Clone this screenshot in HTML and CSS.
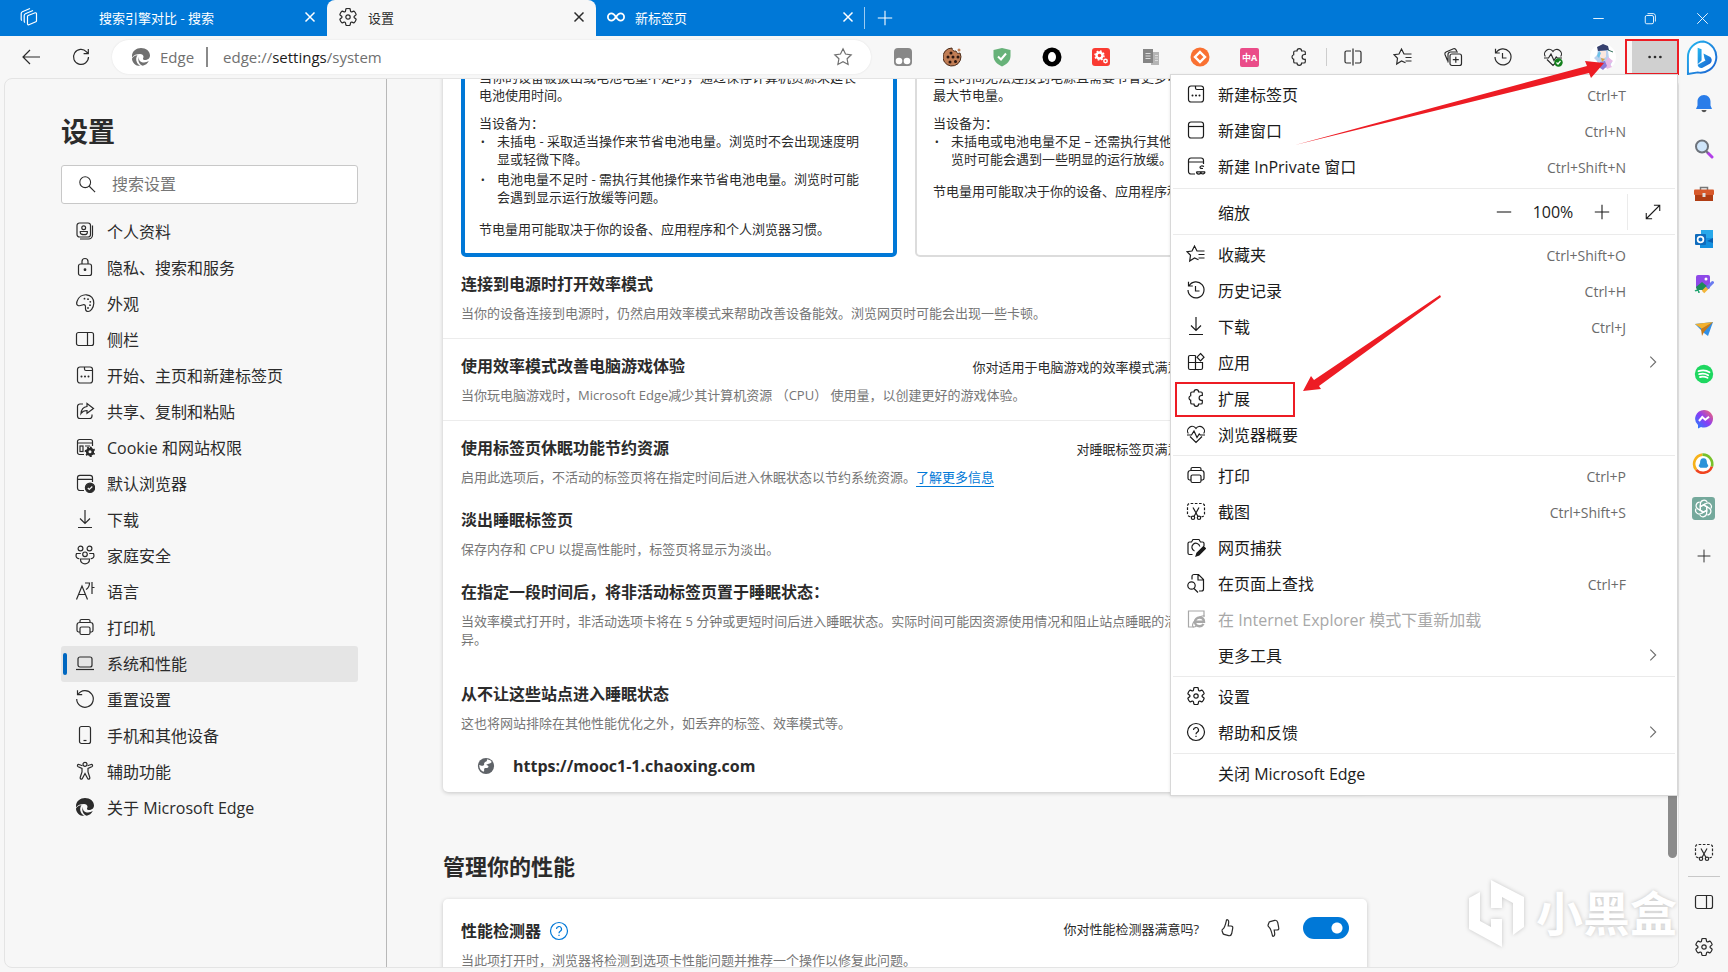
FILE: index.html
```html
<!DOCTYPE html>
<html lang="zh-CN">
<head>
<meta charset="UTF-8">
<title>设置</title>
<link rel="stylesheet" href="styles.css">
</head>
<body>

<!-- icon sprite -->
<svg class="sprite" xmlns="http://www.w3.org/2000/svg">
  <symbol id="i-gear" viewBox="0 0 20 20"><path d="M1.91 7.38A8.5 8.5 0 0 1 3.7 4.3a.5.5 0 0 1 .54-.13l1.92.68a1 1 0 0 0 1.32-.76l.36-2a.5.5 0 0 1 .4-.4 8.53 8.53 0 0 1 3.55 0c.2.04.35.2.38.4l.37 2a1 1 0 0 0 1.32.76l1.92-.68a.5.5 0 0 1 .54.13 8.5 8.5 0 0 1 1.78 3.08c.06.2 0 .4-.15.54l-1.56 1.32a1 1 0 0 0 0 1.52l1.56 1.32a.5.5 0 0 1 .15.54 8.5 8.5 0 0 1-1.78 3.08.5.5 0 0 1-.54.13l-1.92-.68a1 1 0 0 0-1.32.76l-.37 2a.5.5 0 0 1-.38.4 8.53 8.53 0 0 1-3.56 0 .5.5 0 0 1-.39-.4l-.36-2a1 1 0 0 0-1.32-.76l-1.92.68a.5.5 0 0 1-.54-.13 8.5 8.5 0 0 1-1.78-3.08.5.5 0 0 1 .15-.54l1.56-1.32a1 1 0 0 0 0-1.52L2.06 7.92a.5.5 0 0 1-.15-.54Z"/><circle cx="10" cy="10" r="2.2"/></symbol>
  <symbol id="i-close" viewBox="0 0 20 20"><path d="M5 5l10 10M15 5L5 15"/></symbol>
  <symbol id="i-plus" viewBox="0 0 20 20"><path d="M10 2v16M2 10h16"/></symbol>
  <symbol id="i-minus" viewBox="0 0 20 20"><path d="M2 10h16"/></symbol>
  <symbol id="i-chevron" viewBox="0 0 20 20"><path d="M7 4l6 6-6 6"/></symbol>
  <symbol id="i-workspaces" viewBox="0 0 20 20"><path d="M8.500 9.500a1 1 0 0 1 .7-1l7-2.700a1 1 0 0 1 1.300 1v7a1 1 0 0 1-.6.9l-7 3a1 1 0 0 1-1.400-.9zM6 15.500a1.500 1.500 0 0 1-.8-1.300V8.500A2 2 0 0 1 6.400 6.700l7.600-3.200M3 13.500a1.500 1.500 0 0 1-.8-1.300V6.500A2 2 0 0 1 3.400 4.700L11 1.500"/></symbol>
  <symbol id="i-back" viewBox="0 0 20 20"><path d="M19 10H2M9 3l-7 7 7 7"/></symbol>
  <symbol id="i-reload" viewBox="0 0 20 20"><path d="M17.500 10a7.500 7.500 0 1 1-2-5.200L17 6.500M17.300 2v4.700h-4.700"/></symbol>
  <symbol id="i-edge" viewBox="0 0 20 20"><path fill="currentColor" stroke="none" d="M1 9C1 4 5.500 1 10 1c5 0 9 3 9 7.500 0 3-2.500 4.500-5 4.500-1.500 0-2.300-.7-2-1.500.3-.7.500-1 .5-1.700 0-1.500-1.500-2.800-3.500-2.800C5.500 7 2.500 8 1 10.500z"/><path fill="currentColor" stroke="none" d="M1 11.500C2 9.500 4 8.300 6.500 8.200 5 10 4.700 13 6 15.500c.9 1.700 2.200 2.800 3.500 3.500C4.500 19.200 1 15.500 1 11.500z"/><path fill="currentColor" stroke="none" d="M8 9.500c-.8 3 .9 5.500 4 5.900 2 .3 4-.3 5.800-1.300-1.300 2.600-3.500 4.200-6 4.700-3.400-1.200-5.600-5.300-3.800-9.300z"/></symbol>
  <symbol id="i-star" viewBox="0 0 20 20"><path d="M10 1.800l2.500 5.200 5.700.8-4.100 4 1 5.700-5.100-2.700-5.100 2.700 1-5.700-4.100-4 5.700-.8z"/></symbol>
  <symbol id="i-favs" viewBox="0 0 20 20"><path d="M12.500 15.800L8.500 14l-4.800 3 .8-5.700L1 7.700 6 7l2.500-5L11 7h7.500M12.500 10.500h6M12.500 14h6"/></symbol>
  <symbol id="i-puzzle" viewBox="0 0 20 20"><path d="M6.500 4H8a2.300 2.300 0 0 1 4.600 0H15a1.300 1.300 0 0 1 1.300 1.300V7.500h-.8a2.300 2.300 0 0 0 0 4.800h.8v2.400A1.300 1.300 0 0 1 15 16h-2.400a2.300 2.300 0 0 1-4.600 0H6a1.300 1.300 0 0 1-1.300-1.300v-2.400a2.400 2.400 0 0 1 0-4.600V5.300A1.300 1.300 0 0 1 6 4z"/></symbol>
  <symbol id="i-split" viewBox="0 0 20 20"><path d="M8 4H3.500A1.500 1.500 0 0 0 2 5.500v9A1.500 1.500 0 0 0 3.500 16H8M12 4h4.500A1.500 1.500 0 0 1 18 5.500v9a1.500 1.500 0 0 1-1.500 1.500H12M10 1.500v17"/></symbol>
  <symbol id="i-collect" viewBox="0 0 20 20"><rect x="7" y="7" width="11.500" height="11.500" rx="2"/><path d="M12.800 9.700v6M9.800 12.700h6M4.500 13.500L2 7.500a2 2 0 0 1 1-2.500l7.500-3.200a2 2 0 0 1 2.500 1l.7 1.500M5 15.500V7.500a2.500 2.500 0 0 1 2.500-2.500H15"/></symbol>
  <symbol id="i-history" viewBox="0 0 20 20"><path d="M3 6a8 8 0 1 1-1 4M2.500 1.800V6h4.300M9.500 6v5h4"/></symbol>
  <symbol id="i-heart" viewBox="0 0 20 20"><path d="M2.300 9.500A4.500 4.500 0 0 1 10 4.500a4.500 4.500 0 0 1 7.700 5M4 12.500l6 6 6-6M1 11h4.500L8 7l3 6.500 2.200-3.500 1 1H19"/></symbol>
  <symbol id="i-newtab" viewBox="0 0 20 20"><rect x="2.500" y="2" width="15" height="16" rx="2.500"/><path d="M9.500 2v2A1.500 1.500 0 0 0 11 5.500h6.500"/><path stroke-width="2" stroke-linecap="round" d="M6.500 11.500h.01M10 11.500h.01M13.500 11.500h.01"/></symbol>
  <symbol id="i-window" viewBox="0 0 20 20"><rect x="2.500" y="2" width="15" height="16" rx="2.500"/><path d="M2.500 6.500h15"/></symbol>
  <symbol id="i-inprivate" viewBox="0 0 20 20"><path d="M9 18H5a2.500 2.500 0 0 1-2.500-2.500v-11A2.500 2.500 0 0 1 5 2h10a2.500 2.500 0 0 1 2.500 2.500V8M2.500 6h15M18 10.500c-2-1-4-.5-4 .8s1.500 1.200 3 1.200M10.500 15.800h8.500M15 15.800c0 3-4.500 3-4.500 0M19 15.800c0 2.500-3 2.700-4 1.200"/></symbol>
  <symbol id="i-expand" viewBox="0 0 20 20"><path d="M2.500 17.500l15-15M11 2.500h6.500V9M2.500 11v6.500H9"/></symbol>
  <symbol id="i-download" viewBox="0 0 20 20"><path d="M10 1v13M5 9.500l5 5 5-5M3 18.500h14"/></symbol>
  <symbol id="i-apps" viewBox="0 0 20 20"><path d="M9.500 3.500H4A1.500 1.500 0 0 0 2.500 5v11A1.500 1.500 0 0 0 4 17.500h11a1.500 1.500 0 0 0 1.500-1.500v-5.500h-14M9.500 3.500v14M14.500 1.500l3.500 3.700-3.500 3.700L11 5.200z"/></symbol>
  <symbol id="i-print" viewBox="0 0 20 20"><path d="M5 15H3.500A1.700 1.700 0 0 1 2 13.300V8a2.500 2.500 0 0 1 2.500-2.500h11A2.500 2.500 0 0 1 18 8v5.300a1.700 1.700 0 0 1-1.500 1.700H15M5 5.500V4a1.500 1.500 0 0 1 1.500-1.500h7A1.500 1.500 0 0 1 15 4v1.500"/><rect x="5" y="10" width="10" height="7.500" rx="1.500"/></symbol>
  <symbol id="i-snip" viewBox="0 0 20 20"><path stroke-dasharray="2.600 1.600" d="M4.500 15.500A2.500 2.500 0 0 1 1.500 13V5A2.500 2.500 0 0 1 4 2.500h12A2.500 2.500 0 0 1 18.500 5v8a2.500 2.500 0 0 1-3 2.500"/><path d="M7 6.500l5 9M13 6.500l-5 9"/><circle cx="7" cy="16.800" r="1.700"/><circle cx="13" cy="16.800" r="1.700"/></symbol>
  <symbol id="i-capture" viewBox="0 0 20 20"><path d="M6.500 17.500H3.500A1.500 1.500 0 0 1 2 16V6.500A1.500 1.500 0 0 1 3.500 5H5.500L7 2.500h6L14.500 5h2A1.500 1.500 0 0 1 18 6.500V9M8.500 14a4 4 0 1 1 5.300-4.500"/><path fill="currentColor" d="M17.500 9.500l2 2-6.500 6.500-3 1 1-3z"/></symbol>
  <symbol id="i-find" viewBox="0 0 20 20"><circle cx="5.500" cy="12.500" r="3.700"/><path d="M8 15.500l4 4M6 6.500v-3A2 2 0 0 1 8 1.500h4.500l5 5v9.500a2 2 0 0 1-2 2H13M12 1.500v5.500h5.500"/></symbol>
  <symbol id="i-ie" viewBox="0 0 20 20"><path d="M18 8V2H2.500v16H8"/><path stroke-width="2.400" d="M8.500 12.800H18c0-3-2-4.300-4.500-4.300S9 10.500 9 13s2 4.200 4.500 4.200c2 0 3.200-.8 4-2.200"/><path d="M18.500 7c-3-1.500-12 5-12 9.500 0 2 2 1.800 4 .5"/></symbol>
  <symbol id="i-help" viewBox="0 0 20 20"><circle cx="10" cy="10" r="8.500"/><path d="M7.500 8a2.500 2.500 0 1 1 3.700 2.200c-.8.500-1.200.9-1.200 2M10 13.800v1.300"/></symbol>
  <symbol id="i-search" viewBox="0 0 20 20"><circle cx="8" cy="8" r="6"/><path d="M12.500 12.500L19 19"/></symbol>
  <symbol id="i-profile" viewBox="0 0 20 20"><rect x="2" y="2" width="13.500" height="14" rx="2.500"/><circle cx="8.700" cy="6.800" r="1.900"/><path d="M5.300 10.500h7v1.200c0 2.600-7 2.600-7 0zM17.500 4.500V14a4 4 0 0 1-4 4H5"/></symbol>
  <symbol id="i-lock" viewBox="0 0 20 20"><rect x="3.500" y="7" width="13" height="11.500" rx="2"/><path d="M7 7V4.500a3 3 0 0 1 6 0V7"/><circle cx="10" cy="12.700" r=".8" fill="currentColor"/></symbol>
  <symbol id="i-palette" viewBox="0 0 20 20"><path d="M2 8.500C3.500 4 7.500 1.500 11.500 1.800c4.500.3 7.500 4 7.300 8.500-.2 5-3.500 8.400-6 8.200-2.500-.3-2.500-2.500-2.300-4.300.2-2-1-3-2.500-2.500-2 .8-3.300 1.600-5 .8C1.300 11.700 1.500 9.900 2 8.500z"/><path stroke-width="1.800" stroke-linecap="round" d="M9.500 5.700h.01M13 6.200h.01M15.300 8.800h.01M15 12.200h.01M13 15h.01"/></symbol>
  <symbol id="i-panel" viewBox="0 0 20 20"><rect x="1.500" y="3.500" width="17" height="13" rx="2"/><path d="M12.500 3.500v13"/></symbol>
  <symbol id="i-share" viewBox="0 0 20 20"><path d="M8 3H5a2.500 2.500 0 0 0-2.500 2.500v9.500A2.500 2.500 0 0 0 5 17.500h9.500a2.500 2.500 0 0 0 2.500-2.500v-1.500M12 2.500l6.500 5L12 12.300V9.500c-3 0-4.500.8-6 3 .3-4 2.500-6.500 6-7z"/></symbol>
  <symbol id="i-cookie" viewBox="0 0 20 20"><path d="M9 17.500H4.500a2 2 0 0 1-2-2v-11a2 2 0 0 1 2-2h11a2 2 0 0 1 2 2V9M2.500 6h15M10 9h5"/><rect x="5" y="9" width="3" height="5.500"/><circle cx="15" cy="14.800" r="2.800" stroke-width="2.600"/><path stroke-width="2" stroke-dasharray="1.700 2.230" d="M15 10.500a4.300 4.300 0 1 1-.01 0"/></symbol>
  <symbol id="i-default" viewBox="0 0 20 20"><path d="M9 17.500H5A2.500 2.500 0 0 1 2.500 15V4.800A2.500 2.500 0 0 1 5 2.300h10a2.500 2.500 0 0 1 2.500 2.500V9M2.500 6.300h15"/><circle cx="15" cy="14.800" r="4.600" fill="currentColor"/><path stroke="#f7f7f7" d="M12.800 15l1.500 1.500 3-3"/></symbol>
  <symbol id="i-family" viewBox="0 0 20 20"><circle cx="5.500" cy="3.500" r="2.400"/><circle cx="14.500" cy="3.500" r="2.400"/><circle cx="10" cy="9.300" r="2.300"/><path d="M5.800 8.500H1.500c-1.300 3.500.5 5.300 2.800 5M14.200 8.500h4.300c1.300 3.500-.5 5.300-2.800 5M5.500 14h9c.5 6.500-9.500 6.500-9 0z"/></symbol>
  <symbol id="i-lang" viewBox="0 0 20 20"><path d="M1.500 18.500L7 5l5.500 13.500M3.500 13.500h7M10 2h4.500c0 3-1 5-3.500 6.500M17 1v12M17 6.500h2.500"/></symbol>
  <symbol id="i-laptop" viewBox="0 0 20 20"><rect x="3" y="4" width="14" height="10" rx="2"/><path d="M1 16.500h18"/></symbol>
  <symbol id="i-reset" viewBox="0 0 20 20"><path d="M3 5.500a8.300 8.300 0 1 1-1.300 4.500M2.500 1.200v4.500h4.700"/></symbol>
  <symbol id="i-phone" viewBox="0 0 20 20"><rect x="4.500" y="1.500" width="11" height="17" rx="2"/><path d="M8.500 15.500h3"/></symbol>
  <symbol id="i-access" viewBox="0 0 20 20"><circle cx="10" cy="3.300" r="2"/><path d="M7.500 4.800L4 3.500c-1.500-.3-2.300 1.500-.8 2.300l3.800 1.700v3.500l-1.800 5.500c-.3 1.700 1.600 2.300 2.300.8L10 12.500l2.500 4.800c.7 1.500 2.600.9 2.300-.8L13 11V7.500l3.800-1.700c1.500-.8.700-2.600-.8-2.300l-3.500 1.300"/></symbol>
  <symbol id="i-like" viewBox="0 0 20 20"><path d="M9.500 2c.5-.8 2.500 0 2.200 2.500L11.200 8H14c1.500 0 2 1 1.700 2.300l-1 5.200c-.4 1.700-1.300 2.500-3 2.200l-4.700-1.400c-.8-.2-1-.5-1.200-1.300l-.7-2c-.3-1 0-1.500.8-2C8 9.500 8.700 5.500 9.500 2z"/></symbol>
</svg>

<header class="tabbar" role="tablist">
  <div class="tab tab-first">
    <svg class="icon workspaces"><use href="#i-workspaces"/></svg>
    <span class="tab-title">搜索引擎对比 - 搜索</span>
    <button class="tab-close" aria-label="关闭"><svg class="icon"><use href="#i-close"/></svg></button>
  </div>
  <div class="tab active">
    <svg class="icon"><use href="#i-gear"/></svg>
    <span class="tab-title">设置</span>
    <button class="tab-close" aria-label="关闭"><svg class="icon"><use href="#i-close"/></svg></button>
  </div>
  <div class="tab">
    <svg class="icon infinity" viewBox="0 0 20 20"><path stroke-width="2" d="M10 10C8 7 6.500 6 5 6a4 4 0 0 0 0 8c1.500 0 3-1 5-4s3.500-4 5-4a4 4 0 0 1 0 8c-1.500 0-3-1-5-4z"/></svg>
    <span class="tab-title">新标签页</span>
    <button class="tab-close" aria-label="关闭"><svg class="icon"><use href="#i-close"/></svg></button>
  </div>
  <button class="tab-new" aria-label="新建"><svg class="icon"><use href="#i-plus"/></svg></button>
  <div class="win-buttons">
    <button aria-label="最小化"><svg class="icon" viewBox="0 0 20 20"><path d="M3 10h14"/></svg></button>
    <button aria-label="还原"><svg class="icon" viewBox="0 0 20 20"><rect x="3" y="6" width="11" height="11" rx="2"/><path d="M6 3.500h8A3 3 0 0 1 16.500 6v8"/></svg></button>
    <button aria-label="关闭"><svg class="icon" viewBox="0 0 20 20"><path d="M3 3l14 14M17 3L3 17"/></svg></button>
  </div>
</header>

<div class="window">
  <div class="main">
    <div class="toolbar">
      <button class="tool" aria-label="后退"><svg class="icon"><use href="#i-back"/></svg></button>
      <button class="tool" aria-label="刷新"><svg class="icon"><use href="#i-reload"/></svg></button>
      <div class="address">
        <svg class="icon"><use href="#i-edge"/></svg>
        <span class="brand">Edge</span>
        <div class="url" role="textbox" contenteditable="true" spellcheck="false" aria-label="地址">edge://<b>settings</b>/system</div>
        <button class="tool" aria-label="收藏"><svg class="icon"><use href="#i-star"/></svg></button>
      </div>
      <div class="extensions">
        <button class="tool" aria-label="Tampermonkey"><svg class="color" viewBox="0 0 20 20"><rect x="1" y="1" width="18" height="18" rx="4" fill="#888"/><circle cx="6" cy="14" r="3.300" fill="#fff"/><circle cx="14" cy="14" r="3.300" fill="#fff"/></svg></button>
        <button class="tool" aria-label="Cookie"><svg class="color" viewBox="0 0 20 20"><path fill="#c07d55" stroke="#4a2a18" d="M9 1a9 9 0 1 0 8 5 3 3 0 0 1-4-2 3 3 0 0 1-4-3z"/><g fill="#2c1710"><circle cx="8" cy="6" r="1.500"/><circle cx="5" cy="10" r="1.500"/><circle cx="10" cy="10" r="1.500"/><circle cx="15" cy="10" r="1.500"/><circle cx="7" cy="15" r="1.500"/><circle cx="12.500" cy="14.500" r="1.500"/></g><circle cx="16" cy="3" r="1.500" fill="#c07d55"/></svg></button>
        <button class="tool" aria-label="安全"><svg class="color" viewBox="0 0 20 20"><path fill="#67b279" d="M10 1l8.500 2v6c0 5-3.500 8-8.500 10.500C5 17 1.500 14 1.500 9V3z"/><path fill="none" stroke="#fff" stroke-width="2" d="M6 9.500l3 3 5-6"/></svg></button>
        <button class="tool" aria-label="O"><svg class="color" viewBox="0 0 20 20"><circle cx="10" cy="10" r="9.500"/><ellipse cx="10" cy="10" rx="4" ry="5" fill="#fff"/></svg></button>
        <button class="tool" aria-label="工具"><svg class="color" viewBox="0 0 20 20"><rect x="1" y="1" width="18" height="18" rx="3" fill="#fa3b32"/><circle cx="8.500" cy="8.500" r="3" fill="none" stroke="#fff" stroke-width="2.400"/><circle cx="8.500" cy="8.500" r="4.500" fill="none" stroke="#fff" stroke-width="1.500" stroke-dasharray="1.700 1.830"/><circle cx="14.500" cy="14" r="1.700" fill="none" stroke="#fff" stroke-width="1.500"/></svg></button>
        <button class="tool" aria-label="文档"><svg class="color" viewBox="0 0 20 20"><path fill="#b5b5b5" d="M10 5h8v13h-8z"/><path fill="#858585" d="M2 2h10v14H2z"/><path stroke="#ddd" d="M4.500 6.500h5M4.500 9h5M4.500 11.500h5M14 8.500h3M14 11h3M14 13.500h3"/></svg></button>
        <button class="tool" aria-label="钻石"><svg class="color" viewBox="0 0 20 20"><circle cx="10" cy="10" r="9.500" fill="#f97132"/><path fill="none" stroke="#fff" stroke-width="2.400" d="M10 5l5 5-5 5-5-5z"/></svg></button>
        <button class="tool translate" aria-label="翻译"><span>中A</span></button>
        <button class="tool" aria-label="扩展"><svg class="icon"><use href="#i-puzzle"/></svg></button>
      </div>
      <div class="actions">
        <button class="tool" aria-label="拆分"><svg class="icon"><use href="#i-split"/></svg></button>
        <button class="tool" aria-label="收藏夹"><svg class="icon"><use href="#i-favs"/></svg></button>
        <button class="tool" aria-label="集锦"><svg class="icon"><use href="#i-collect"/></svg></button>
        <button class="tool" aria-label="历史记录"><svg class="icon"><use href="#i-history"/></svg></button>
        <button class="tool" aria-label="浏览器概要"><svg class="icon" viewBox="0 0 20 20"><use href="#i-heart"/><circle cx="15.500" cy="15.500" r="4.200" fill="#13801c" stroke="none"/><path stroke="#fff" d="M13.500 15.500l1.500 1.500 2.500-3"/></svg></button>
        <button class="tool" aria-label="个人资料"><svg class="avatar" viewBox="0 0 28 28"><circle cx="14" cy="14" r="13" fill="#fff"/><path fill="#b9d0ee" d="M9 6c3-3 8-3 10 2l1 7 3 4-3 6H10l-2-7-3-3 3-3z"/><path fill="#e6b9e6" d="M19 14l5 4-3 3 2 3-5 2-3-5z"/><path fill="#36406e" d="M8 4l6-3 5 2 1 4-11 1z"/><path fill="#fbe7df" d="M11 8h6v6l-3 2-3-2z"/><path fill="#6cc3ea" d="M10 8l2 2-2 5-2-2z"/><path fill="#8d7bd6" d="M11 19l5-1 2 5-4 4-3-2z"/><path fill="#d4a14a" d="M12 15l4 1-3 3z"/><path stroke="#35735e" d="M19 7l5 2"/></svg></button>
      </div>
      <div class="more-mark"><button class="more" aria-label="设置及其他"><svg class="icon" viewBox="0 0 20 20"><path stroke-width="3" stroke-linecap="round" d="M4 10h.01M10 10h.01M16 10h.01"/></svg></button></div>
    </div>

    <div class="frame">
      <nav class="nav">
        <h1>设置</h1>
        <label class="search"><svg class="icon"><use href="#i-search"/></svg><input type="text" placeholder="搜索设置" aria-label="搜索设置"></label>
        <a href="#"><svg class="icon"><use href="#i-profile"/></svg>个人资料</a>
        <a href="#"><svg class="icon"><use href="#i-lock"/></svg>隐私、搜索和服务</a>
        <a href="#"><svg class="icon"><use href="#i-palette"/></svg>外观</a>
        <a href="#"><svg class="icon"><use href="#i-panel"/></svg>侧栏</a>
        <a href="#"><svg class="icon"><use href="#i-newtab"/></svg>开始、主页和新建标签页</a>
        <a href="#"><svg class="icon"><use href="#i-share"/></svg>共享、复制和粘贴</a>
        <a href="#"><svg class="icon"><use href="#i-cookie"/></svg>Cookie 和网站权限</a>
        <a href="#"><svg class="icon"><use href="#i-default"/></svg>默认浏览器</a>
        <a href="#"><svg class="icon"><use href="#i-download"/></svg>下载</a>
        <a href="#"><svg class="icon"><use href="#i-family"/></svg>家庭安全</a>
        <a href="#"><svg class="icon"><use href="#i-lang"/></svg>语言</a>
        <a href="#"><svg class="icon"><use href="#i-print"/></svg>打印机</a>
        <a href="#" class="current"><svg class="icon"><use href="#i-laptop"/></svg>系统和性能</a>
        <a href="#"><svg class="icon"><use href="#i-reset"/></svg>重置设置</a>
        <a href="#"><svg class="icon"><use href="#i-phone"/></svg>手机和其他设备</a>
        <a href="#"><svg class="icon"><use href="#i-access"/></svg>辅助功能</a>
        <a href="#"><svg class="icon"><use href="#i-edge"/></svg>关于 Microsoft Edge</a>
      </nav>

      <main class="content">
        <section class="card card-scrolled">
          <div class="modes">
            <div class="mode selected">
              <p>当你的设备被拔出或电池电量不足时，通过保存计算机资源来延长电池使用时间。</p>
              <p>当设备为：</p>
              <ul>
                <li>未插电 - 采取适当操作来节省电池电量。浏览时不会出现速度明显或轻微下降。</li>
                <li>电池电量不足时 - 需执行其他操作来节省电池电量。浏览时可能会遇到显示运行放缓等问题。</li>
              </ul>
              <p>节电量用可能取决于你的设备、应用程序和个人浏览器习惯。</p>
            </div>
            <div class="mode">
              <p>当长时间无法连接到电源且需要节省更多电量时，可帮助你实现的<br>最大节电量。</p>
              <p>当设备为：</p>
              <ul>
                <li>未插电或电池电量不足 – 还需执行其他操作来节省电量。浏<br>览时可能会遇到一些明显的运行放缓。</li>
              </ul>
              <p>节电量用可能取决于你的设备、应用程序和个人浏览器习惯。</p>
            </div>
          </div>
          <div class="row">
            <h3>连接到电源时打开效率模式</h3>
            <p>当你的设备连接到电源时，仍然启用效率模式来帮助改善设备能效。浏览网页时可能会出现一些卡顿。</p>
          </div>
          <div class="row line">
            <div class="row-head">
              <h3>使用效率模式改善电脑游戏体验</h3>
              <span class="ask">你对适用于电脑游戏的效率模式满意吗?</span>
            </div>
            <p>当你玩电脑游戏时，Microsoft Edge减少其计算机资源 （CPU） 使用量，以创建更好的游戏体验。</p>
          </div>
          <div class="row line">
            <div class="row-head">
              <h3>使用标签页休眠功能节约资源</h3>
              <span class="ask">对睡眠标签页满意吗?</span>
            </div>
            <p>启用此选项后，不活动的标签页将在指定时间后进入休眠状态以节约系统资源。<a href="#">了解更多信息</a></p>
            <h3 class="sub">淡出睡眠标签页</h3>
            <p>保存内存和 CPU 以提高性能时，标签页将显示为淡出。</p>
            <h3 class="sub">在指定一段时间后，将非活动标签页置于睡眠状态：</h3>
            <p>当效率模式打开时，非活动选项卡将在 5 分钟或更短时间后进入睡眠状态。实际时间可能因资源使用情况和阻止站点睡眠的活动而有差<br>异。</p>
            <h3 class="sub far">从不让这些站点进入睡眠状态</h3>
            <p>这也将网站排除在其他性能优化之外，如丢弃的标签、效率模式等。</p>
            <div class="site">
              <svg viewBox="0 0 20 20"><circle cx="10" cy="10" r="9" fill="#5f6368"/><path fill="#fff" d="M11 2.500c.5 2.500-1 2.500-2.500 3.500S9 8.500 7 9.500 3 8 2.500 9c0 4 2 6.500 4.500 7.500 2-1 0-3 1.500-4s3 .5 4-1-1-2-2-2.500 3-1 5-2.500-1-3.500-4.500-4z"/></svg>
              https://mooc1-1.chaoxing.com
            </div>
          </div>
        </section>

        <h2>管理你的性能</h2>
        <section class="card">
          <div class="row perf">
            <div class="row-head">
              <h3>性能检测器</h3>
              <svg class="icon help"><use href="#i-help"/></svg>
              <div class="feedback">
                <label for="perf-toggle">你对性能检测器满意吗?</label>
                <button class="thumb" aria-label="满意"><svg class="icon"><use href="#i-like"/></svg></button>
                <button class="thumb down" aria-label="不满意"><svg class="icon"><use href="#i-like"/></svg></button>
                <input type="checkbox" id="perf-toggle" class="toggle" checked>
              </div>
            </div>
            <p>当此项打开时，浏览器将检测到选项卡性能问题并推荐一个操作以修复此问题。</p>
          </div>
        </section>
      </main>
      <div class="scroll-thumb"></div>
      <div class="watermark">
        <svg viewBox="0 0 58 68"><path d="M23 1L56 18V48L45 56V24L34 18V29H23zM12 13V42L23 48V40H34V68L1 50V19z"/></svg>
        <span>小黑盒</span>
      </div>
    </div>
  </div>

  <aside class="side">
    <button class="bing" aria-label="Bing"><svg viewBox="0 0 36 36"><defs><linearGradient id="g-bing" x1="0" y1="0" x2="1" y2="1"><stop offset="0" stop-color="#24b7ef"/><stop offset="1" stop-color="#1b5fd0"/></linearGradient></defs><path fill="#fff" stroke="url(#g-bing)" stroke-width="2" d="M18 1.500A16 16 0 1 1 12 33.300L2 35V18A16 16 0 0 1 18 1.500z"/><path fill="url(#g-bing)" d="M12 8l4 1.500V21l-4 4zM18 14l7 3.500c2.500 2.500 1.500 5.500-.5 7L17 28.500c-2 1-5-.5-5-3L20 21l-1-2z"/></svg></button>
    <button aria-label="通知"><svg viewBox="0 0 20 20"><path fill="#2a7de9" d="M10 1c4 0 6.500 3 6.500 6.500v4L18 15H2l1.500-3.500v-4C3.500 4 6 1 10 1z"/><path fill="#555" d="M7.500 16h5c-.5 3-4.500 3-5 0z"/></svg></button>
    <button aria-label="搜索"><svg viewBox="0 0 20 20"><circle cx="8" cy="7.500" r="6" fill="#cfe6fb" stroke="#6d737b" stroke-width="2"/><path stroke="#b23fe8" stroke-width="3" stroke-linecap="round" d="M14 14l4 4"/><path stroke="#6d737b" stroke-width="2" d="M12 12l2 2"/></svg></button>
    <button aria-label="工具"><svg viewBox="0 0 20 20"><path fill="none" stroke="#777" stroke-width="1.500" d="M6.500 6V3.500h7V6"/><rect x="0" y="5.500" width="20" height="5.500" rx="1" fill="#d7592b"/><path fill="#b03d14" d="M1 11h18v6H1z"/><rect x="8.500" y="9" width="3" height="4" fill="#ddd"/></svg></button>
    <button aria-label="Outlook"><svg viewBox="0 0 20 20"><path fill="#28a8ea" d="M7 1h12v9H7z"/><path fill="#1490df" d="M6 9h13v10H6z"/><path fill="#0a5fb0" d="M19 9v5l-6-2z"/><rect x="1" y="5" width="11" height="11" rx="1" fill="#0f6cbd"/><circle cx="6.500" cy="10.500" r="2.900" fill="none" stroke="#fff" stroke-width="1.700"/></svg></button>
    <button aria-label="图像"><svg viewBox="0 0 20 20"><rect x="2" y="1" width="14" height="14" rx="2" fill="#8e49e8"/><circle cx="12" cy="5" r="1.500" fill="#fff"/><path fill="#1c8c5a" d="M2 13l6-5 6 5-3 3H3z"/><path fill="none" stroke="#1aa36c" stroke-width="1.500" d="M1 17c3-2 4 0 4 2"/><path stroke="#6a7bf0" stroke-width="3" stroke-linecap="round" d="M18.500 8.500L13 14"/><path stroke="#f2b53b" stroke-width="3.500" d="M13 14l-4 4"/></svg></button>
    <button aria-label="发送"><svg viewBox="0 0 20 20"><path fill="#3090e8" d="M1 5l18-2-5 14-4-3z"/><path fill="#f4b12e" d="M1 5l18-2L8 10z"/><path fill="#c77a1a" d="M7 10l12-7-9 10-2 4z"/></svg></button>
    <button aria-label="Spotify"><svg viewBox="0 0 20 20"><circle cx="10" cy="10" r="9.200" fill="#1ed760"/><path fill="none" stroke="#fff" stroke-width="1.800" stroke-linecap="round" d="M4.500 7.200c4-1.200 8-.8 11 1M5.200 10.200c3-.9 6.500-.5 9 1M6 13c2.500-.6 5-.4 7.500.8"/></svg></button>
    <button aria-label="Messenger"><svg viewBox="0 0 20 20"><defs><linearGradient id="g-msg" x1="0" y1="1" x2="1" y2="0"><stop offset="0" stop-color="#1689ff"/><stop offset=".5" stop-color="#8a3cf5"/><stop offset="1" stop-color="#ff6a68"/></linearGradient></defs><path fill="url(#g-msg)" d="M10 1a9 8.700 0 1 1-3 16.900L4 19.500V16A9 8.700 0 0 1 10 1z"/><path fill="none" stroke="#fff" stroke-width="2" d="M5 12l3.300-4 3 2.700 3.700-3"/></svg></button>
    <button aria-label="QQ"><svg class="big" viewBox="0 0 22 22"><circle cx="11" cy="11" r="9" fill="#fff"/><g fill="none" stroke-width="2.500"><path stroke="#f6b21b" d="M4 17A9 9 0 0 1 10 2.500"/><path stroke="#77c12a" d="M10 2.500A9 9 0 0 1 19 14"/><path stroke="#f0441f" d="M19 14A9 9 0 0 1 4 17"/></g><path fill="#2b93d9" d="M11 6c2.500 0 3.300 2 3.300 4.500l1.400 3-1.700 1.500H8l-1.700-1.500 1.400-3C7.700 8 8.500 6 11 6z"/></svg></button>
    <button aria-label="ChatGPT"><svg class="big" viewBox="0 0 22 22"><rect width="22" height="22" rx="3" fill="#75a99c"/><g fill="none" stroke="#fff" stroke-width="1.200"><path id="gpt" d="M8 9.300V6.500a3.500 3.500 0 0 1 6.500-1.700M8 9.300l3-1.800 4.500 2.600"/><use href="#gpt" transform="rotate(60 11 11)"/><use href="#gpt" transform="rotate(120 11 11)"/><use href="#gpt" transform="rotate(180 11 11)"/><use href="#gpt" transform="rotate(240 11 11)"/><use href="#gpt" transform="rotate(300 11 11)"/></g></svg></button>
    <button class="side-add" aria-label="添加"><svg class="icon"><use href="#i-plus"/></svg></button>
    <button class="side-bottom" aria-label="截图"><svg class="icon"><use href="#i-snip"/></svg></button>
    <hr>
    <button aria-label="侧栏"><svg class="icon"><use href="#i-panel"/></svg></button>
    <button aria-label="设置"><svg class="icon"><use href="#i-gear"/></svg></button>
  </aside>

  <div class="menu">
    <button><svg class="icon"><use href="#i-newtab"/></svg><span>新建标签页</span><kbd>Ctrl+T</kbd></button>
    <button><svg class="icon"><use href="#i-window"/></svg><span>新建窗口</span><kbd>Ctrl+N</kbd></button>
    <button><svg class="icon"><use href="#i-inprivate"/></svg><span>新建 InPrivate 窗口</span><kbd>Ctrl+Shift+N</kbd></button>
    <hr>
    <div class="zoom">
      <span class="zoom-label">缩放</span>
      <button aria-label="缩小"><svg class="icon"><use href="#i-minus"/></svg></button>
      <span class="zoom-value">100%</span>
      <button aria-label="放大"><svg class="icon"><use href="#i-plus"/></svg></button>
      <button class="full" aria-label="全屏"><svg class="icon"><use href="#i-expand"/></svg></button>
    </div>
    <hr>
    <button><svg class="icon"><use href="#i-favs"/></svg><span>收藏夹</span><kbd>Ctrl+Shift+O</kbd></button>
    <button><svg class="icon"><use href="#i-history"/></svg><span>历史记录</span><kbd>Ctrl+H</kbd></button>
    <button><svg class="icon"><use href="#i-download"/></svg><span>下载</span><kbd>Ctrl+J</kbd></button>
    <button><svg class="icon"><use href="#i-apps"/></svg><span>应用</span><svg class="icon chevron"><use href="#i-chevron"/></svg></button>
    <button class="marked"><svg class="icon"><use href="#i-puzzle"/></svg><span>扩展</span></button>
    <button><svg class="icon"><use href="#i-heart"/></svg><span>浏览器概要</span></button>
    <hr>
    <button><svg class="icon"><use href="#i-print"/></svg><span>打印</span><kbd>Ctrl+P</kbd></button>
    <button><svg class="icon"><use href="#i-snip"/></svg><span>截图</span><kbd>Ctrl+Shift+S</kbd></button>
    <button><svg class="icon"><use href="#i-capture"/></svg><span>网页捕获</span></button>
    <button><svg class="icon"><use href="#i-find"/></svg><span>在页面上查找</span><kbd>Ctrl+F</kbd></button>
    <button disabled><svg class="icon"><use href="#i-ie"/></svg><span>在 Internet Explorer 模式下重新加载</span></button>
    <button><svg class="icon"></svg><span>更多工具</span><svg class="icon chevron"><use href="#i-chevron"/></svg></button>
    <hr>
    <button><svg class="icon"><use href="#i-gear"/></svg><span>设置</span></button>
    <button><svg class="icon"><use href="#i-help"/></svg><span>帮助和反馈</span><svg class="icon chevron"><use href="#i-chevron"/></svg></button>
    <hr>
    <button><svg class="icon"></svg><span>关闭 Microsoft Edge</span></button>

    <!-- arrows drawn over the menu -->
    <svg class="arrows" viewBox="0 0 510 360">
      <path d="M124 108L416 29L414 24L433 26L420 41L418 36z"/>
      <path d="M269 258L270 260L148 349L150 352L132 354L140 339L143 343z"/>
    </svg>
  </div>
</div>

</body>
</html>
```
FILE: styles.css
```css
*, *:before, *:after{
  box-sizing: border-box;
}
body{
  margin: 0;
  height: 100vh;
  display: flex;
  flex-direction: column;
  overflow: hidden;
  background: #f7f7f7;
  color: #2b2b2b;
  font-family: "Open Sans", "Noto Sans CJK SC", sans-serif;
  font-size: 16px;
}
h1, h2, h3, p, ul{
  margin: 0;
}
button{
  padding: 0;
  border: 0;
  background: none;
  color: inherit;
  font: inherit;
  display: flex;
  align-items: center;
  justify-content: center;
}
.sprite{
  position: absolute;
  width: 0;
  height: 0;
}
.icon{
  width: 20px;
  height: 20px;
  flex: none;
  fill: none;
  stroke: currentColor;
  stroke-width: 1.2;
}

/* tabs */
.tabbar{
  flex: none;
  height: 36px;
  display: flex;
  background: #0078d7;
  color: #fff;
}
.tab{
  width: 269px;
  display: flex;
  align-items: center;
  padding: 0 8px 2px 11px;
  font-size: 13px;
}
.tab-first{
  width: 327px;
  padding-left: 19px;
}
.tab-first .tab-title{
  margin-left: 60px;
}
.tab.active{
  background: #f7f7f7;
  color: #2b2b2b;
  border-radius: 8px 8px 0 0;
}
.infinity{
  width: 18px;
  height: 18px;
}
.tab-title{
  margin-left: 10px;
  flex: 1;
}
.tab-close .icon{
  width: 18px;
  height: 18px;
  stroke-width: 1.6;
}
.tab-new{
  width: 40px;
  height: 22px;
  margin-top: 7px;
  margin-left: -1px;
  border-left: 1px solid #9ccbf2;
}
.tab-new .icon{
  width: 18px;
  height: 18px;
}
.win-buttons{
  margin-left: auto;
  display: flex;
}
.win-buttons button{
  width: 52px;
}
.win-buttons .icon{
  width: 15px;
  height: 15px;
}

/* toolbar */
.window{
  flex: 1;
  min-height: 0;
  display: flex;
  position: relative;
}
.main{
  flex: 1;
  min-width: 0;
  display: flex;
  flex-direction: column;
  padding: 0 0 4px 4px;
}
.toolbar{
  flex: none;
  height: 42px;
  display: flex;
  align-items: center;
  padding-left: 11px;
}
.tool{
  width: 32px;
  height: 32px;
}
.toolbar > .tool{
  margin-right: 18px;
}
.address{
  flex: 1;
  height: 34px;
  display: flex;
  align-items: center;
  padding: 0 12px 0 19px;
  border-radius: 17px;
  background: #fff;
  color: #707070;
  font-size: 15px;
  box-shadow: 0 0 2px #e0e0e0;
}
.toolbar > .address{
  margin-left: -3px;
}
.brand{
  margin: 0 11px 0 9px;
  padding-right: 12px;
  line-height: 20px;
  border-right: 2px solid #8a8a8a;
}
.url{
  flex: 1;
  margin-left: 4px;
}
.url b{
  color: #1b1b1b;
  font-weight: 400;
}
.color{
  width: 20px;
  height: 20px;
}
.extensions, .actions{
  display: flex;
  justify-content: space-between;
}
.extensions{
  width: 428px;
  margin: 0 11px 0 16px;
}
.actions{
  width: 293px;
  height: 18px;
  align-items: center;
  padding-left: 10px;
  border-left: 1px solid #cdcdcd;
}
.translate span{
  width: 19px;
  line-height: 19px;
  border-radius: 2px;
  background: #ea4c89;
  color: #fff;
  font-size: 9px;
  font-weight: 700;
}
.avatar{
  width: 28px;
  height: 28px;
}
.more-mark{
  width: 54px;
  height: 36px;
  margin-left: 6px;
  padding-left: 5px;
  border: 2px solid #ed1c24;
}
.more{
  width: 100%;
  height: 100%;
  background: #d0d0d0;
}
.more .icon{
  width: 18px;
  height: 18px;
}

/* page */
.frame{
  flex: 1;
  min-height: 0;
  display: flex;
  position: relative;
  overflow: hidden;
  border: 1px solid #e4e4e4;
  border-radius: 8px;
}
.nav{
  width: 382px;
  padding: 35px 28px 0 56px;
  border-right: 1px solid #b8b8b8;
}
.nav h1{
  font-size: 27px;
  line-height: 36px;
  margin-bottom: 15px;
}
.search{
  height: 39px;
  display: flex;
  align-items: center;
  margin-bottom: 10px;
  padding: 0 0 2px 16px;
  background: #fff;
  border: 1px solid #c8c8c8;
  border-radius: 3px;
}
.search .icon{
  width: 18px;
  height: 18px;
}
.search input{
  flex: 1;
  min-width: 0;
  margin-left: 16px;
  padding: 0;
  border: 0;
  outline: 0;
  font: inherit;
}
.search input::placeholder{
  color: #767676;
}
.nav a{
  height: 36px;
  display: flex;
  align-items: center;
  gap: 12px;
  padding: 0 0 2px 14px;
  color: inherit;
  text-decoration: none;
  border-radius: 3px;
  position: relative;
}
.nav a.current{
  background: #e5e5e5;
}
.nav a.current:before{
  content: '';
  position: absolute;
  left: 2px;
  top: 7px;
  width: 4px;
  height: 22px;
  border-radius: 2px;
  background: #0067c0;
}
.content{
  flex: 1;
  min-width: 0;
  padding-left: 56px;
}
.card{
  max-width: 924px;
  background: #fff;
  border-radius: 5px;
  box-shadow: 0 1px 4px rgba(0, 0, 0, 0.2);
}
/* the page is scrolled part of the way down */
.card-scrolled{
  margin-top: -28px;
}
.modes{
  display: flex;
  gap: 18px;
  padding: 0 18px;
}
.mode{
  flex: 1;
  height: 206px;
  padding: 15px 26px 0 16px;
  border: 2px solid #dcdcdc;
  border-radius: 5px;
  font-size: 13px;
  line-height: 18px;
}
.mode.selected{
  border: 4px solid #0078d7;
  padding: 13px 26px 0 14px;
}
.mode p + p{
  margin-top: 10px;
}
.mode ul{
  padding-left: 6px;
  margin-bottom: 14px;
  list-style-type: "•";
}
.mode li{
  padding-left: 12px;
}
.mode li::marker{
  font-size: 11px;
}
.mode li + li{
  margin-top: 2px;
}
.row{
  padding: 17px 18px 16px;
}
.row.line{
  border-top: 1px solid #ececec;
}
.row h3{
  font-size: 16px;
  line-height: 20px;
}
.row p{
  margin-top: 10px;
  color: #767676;
  font-size: 13px;
  line-height: 18px;
}
.row p a{
  color: #0078d7;
  text-underline-offset: 4px;
}
.row-head{
  height: 20px;
  display: flex;
  align-items: center;
}
.ask{
  margin-left: auto;
  margin-right: 150px;
  font-size: 13px;
}
.row .sub{
  margin-top: 24px;
}
.row .far{
  margin-top: 36px;
}
.site{
  display: flex;
  align-items: center;
  gap: 18px;
  height: 28px;
  margin: 20px 0 -4px 16px;
  font-weight: 700;
}
.site svg{
  width: 18px;
  height: 18px;
}
.content h2{
  margin: 58px 0 17px;
  font-size: 22px;
  line-height: 32px;
}
.perf{
  padding-top: 22px;
}
.help{
  margin-left: 8px;
  color: #0078d7;
}
.feedback{
  display: flex;
  align-items: center;
  margin: 0 0 6px auto;
  font-size: 13px;
}
.thumb{
  margin-left: 18px;
}
.thumb.down{
  margin: 0 20px 0 26px;
}
.thumb.down .icon{
  transform: scaleY(-1);
}
.toggle{
  appearance: none;
  width: 46px;
  height: 22px;
  margin: 0;
  border-radius: 11px;
  background: radial-gradient(circle at 34px 11px, #fff 5px, #0078d7 6px);
}
.scroll-thumb{
  position: absolute;
  right: 1px;
  bottom: 109px;
  width: 9px;
  height: 110px;
  border-radius: 5px;
  background: #8b8b8b;
}
.watermark{
  position: absolute;
  right: 1px;
  bottom: 20px;
  display: flex;
  align-items: center;
  gap: 10px;
  color: #fff;
  font-size: 47px;
  font-weight: 700;
  line-height: 68px;
  text-shadow: 0 0 4px rgba(0, 0, 0, 0.2);
}
.watermark svg{
  width: 58px;
  height: 68px;
  fill: #fff;
  filter: drop-shadow(0 0 2px rgba(0, 0, 0, 0.2));
}

/* right side bar */
.side{
  width: 49px;
  flex: none;
  display: flex;
  flex-direction: column;
  align-items: center;
  padding-bottom: 3px;
}
.side button{
  width: 45px;
  height: 45px;
}
.side svg{
  width: 20px;
  height: 20px;
}
.side .big{
  width: 23px;
  height: 23px;
}
.side .bing{
  height: 42px;
  margin-bottom: 3px;
}
.side .bing svg{
  width: 35px;
  height: 35px;
}
.side .side-add{
  height: 50px;
}
.side-add .icon{
  width: 16px;
  height: 16px;
}
.side .side-bottom{
  margin-top: auto;
}
.side hr{
  width: 32px;
  margin: 2px 0;
  border: 0;
  border-top: 1px solid #c8c8c8;
}

/* main menu */
.menu{
  position: absolute;
  top: 38px;
  right: 50px;
  width: 508px;
  padding: 2px 0 3px;
  background: #fff;
  border: 1px solid #d8d8d8;
  box-shadow: 0 1px 3px rgba(0, 0, 0, 0.1);
  color: #1b1b1b;
}
.menu > button{
  width: 100%;
  height: 36px;
  padding: 0 0 2px 15px;
  justify-content: flex-start;
  gap: 12px;
  text-align: left;
  position: relative;
}
.menu > button:disabled{
  color: #a8a8a8;
}
.menu kbd{
  margin: 0 51px 0 auto;
  padding-top: 2px;
  color: #6b6b6b;
  font: inherit;
  font-size: 14px;
}
.menu .chevron{
  width: 18px;
  height: 18px;
  margin: 0 15px 0 auto;
  color: #6b6b6b;
}
.menu hr{
  margin: 3px 2px 2px;
  border: 0;
  border-top: 1px solid #ebebeb;
}
.menu hr ~ hr{
  margin-top: 2px;
}
.marked:before{
  content: '';
  position: absolute;
  left: 4px;
  top: 1px;
  width: 120px;
  height: 35px;
  border: 2px solid #ed1c24;
}
.zoom{
  height: 41px;
  display: flex;
  align-items: center;
  padding-left: 47px;
}
.zoom-label{
  margin-right: auto;
}
.zoom .icon{
  width: 18px;
  height: 18px;
}
.zoom-value{
  width: 80px;
  text-align: center;
}
.zoom .full{
  height: 36px;
  width: 50px;
  margin-left: 16px;
  border-left: 1px solid #ebebeb;
}
.arrows{
  position: absolute;
  left: 0;
  top: -38px;
  width: 510px;
  height: 360px;
  fill: #ed1c24;
  pointer-events: none;
}
```
